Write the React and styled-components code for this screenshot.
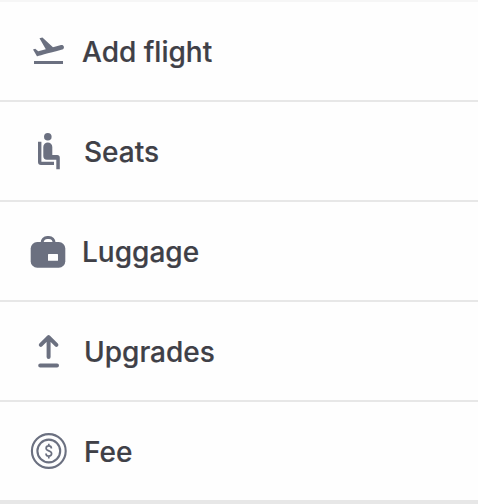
import React from 'react';
import styled, { createGlobalStyle } from 'styled-components';

const GlobalStyle = createGlobalStyle`
  * {
    box-sizing: border-box;
  }

  body {
    margin: 0;
    background: #fefefe;
    font-family: Inter, 'Liberation Sans', sans-serif;
  }
`;

const Menu = styled.ul`
  height: 504px;
  margin: 0;
  padding: 0;
  list-style: none;
  overflow: hidden;
  border-top: 2px solid #f6f6f6;
  border-bottom: 4px solid #e7e7e7;
`;

const MenuItem = styled.li`
  display: flex;
  align-items: center;
  height: 100px;
  padding-left: 24px;
  border-bottom: 2px solid #e7e7e7;

  &:last-child {
    height: 98px;
    border-bottom: none;
  }
`;

const Icon = styled.svg`
  flex: none;
  width: 50px;
  height: 50px;
  color: #6b7080;
`;

const Label = styled.span`
  margin-left: ${props => props.$offset}px;
  padding-top: 2px;
  color: #3f4047;
  font-size: 28px;
  font-weight: 500;
  line-height: 34px;
  white-space: nowrap;
  -webkit-text-stroke: 0.2px #3f4047;
`;

const FlightIcon = () => (
  <Icon viewBox="0 0 50 50">
    <path
      transform="translate(6.2 6) scale(1.526)"
      fill="currentColor"
      d="M2.5 19h19v2h-19v-2zm19.57-9.36c-.21-.8-1.04-1.28-1.84-1.06L14.92 10l-6.9-6.43-1.93.51 4.14 7.17-4.97 1.33-1.97-1.54-1.45.39 2.59 4.49s7.12-1.9 16.57-4.43c.81-.23 1.28-1.05 1.07-1.85z"
    />
  </Icon>
);

const SeatIcon = () => (
  <Icon viewBox="0 0 50 50" fill="currentColor">
    <circle cx="23.8" cy="10.8" r="3.8" />
    <path d="M14 15.8h3.4v19.9H30V39H17a3 3 0 0 1-3-3z" />
    <path d="M19.3 21a4.5 4.5 0 0 1 9 0v8h4.8a2.7 2.7 0 0 1 2.7 2.7v11.6h-3.5v-9.6H23a3.7 3.7 0 0 1-3.7-3.7z" />
  </Icon>
);

const LuggageIcon = () => (
  <Icon viewBox="0 0 50 50">
    <path
      d="M18.1 18v-1.2c0-3 2.2-5.3 5.2-5.3h1.6c3 0 5.2 2.3 5.2 5.3V18"
      fill="none"
      stroke="currentColor"
      strokeWidth="3"
    />
    <rect x="6.7" y="16" width="34.6" height="25.7" rx="6.5" fill="currentColor" />
    <rect x="24" y="28" width="10" height="6.7" rx="0.5" fill="#fefefe" />
  </Icon>
);

const UpgradeIcon = () => (
  <Icon
    viewBox="0 0 50 50"
    fill="none"
    stroke="currentColor"
    strokeWidth="4"
    strokeLinecap="round"
    strokeLinejoin="round"
  >
    <path d="M24.6 31V11.3M16.8 18.9l7.8-7.8 7.8 7.8M16.2 39.5H33" />
  </Icon>
);

const FeeIcon = () => (
  <Icon viewBox="0 0 50 50" fill="none" stroke="currentColor" strokeWidth="2.1">
    <circle cx="24.8" cy="25" r="16.9" />
    <circle cx="24.8" cy="25" r="11.4" />
    <path
      d="M27.4 22.4c0-1.6-1.1-2.5-2.6-2.5s-2.7.9-2.7 2.4c0 3.2 5.5 1.9 5.5 5.2 0 1.6-1.2 2.6-2.8 2.6s-2.8-1-2.8-2.7M24.8 17.8v2.1M24.8 30.1v2.3"
      strokeWidth="1.7"
    />
  </Icon>
);

const items = [
  { label: 'Add flight', icon: FlightIcon, offset: 8 },
  { label: 'Seats', icon: SeatIcon, offset: 10 },
  { label: 'Luggage', icon: LuggageIcon, offset: 8 },
  { label: 'Upgrades', icon: UpgradeIcon, offset: 10 },
  { label: 'Fee', icon: FeeIcon, offset: 10 },
];

function App() {
  return (
    <>
      <GlobalStyle />
      <Menu>
        {items.map(({ label, icon: ItemIcon, offset }) => (
          <MenuItem key={label}>
            <ItemIcon />
            <Label $offset={offset}>{label}</Label>
          </MenuItem>
        ))}
      </Menu>
    </>
  );
}

export default App;
